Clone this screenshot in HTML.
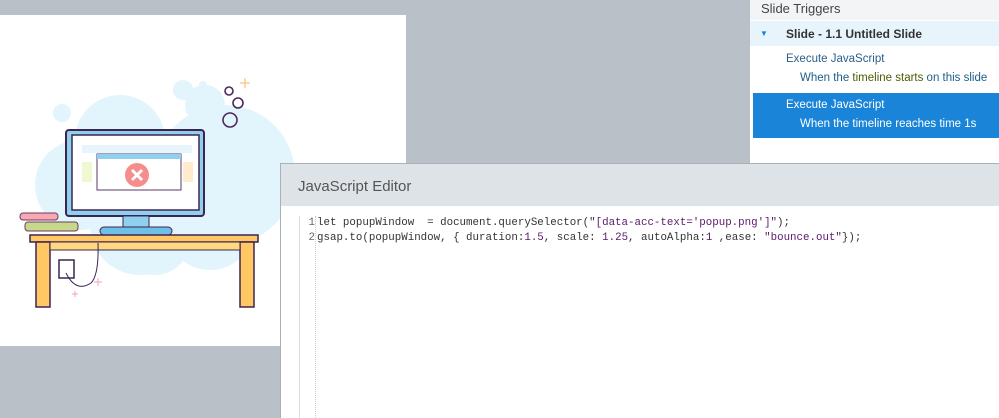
<!DOCTYPE html>
<html><head><meta charset="utf-8"><style>
body{margin:0;width:999px;height:417px;background:#b9c0c7;position:relative;overflow:hidden;font-family:"Segoe UI","Liberation Sans",sans-serif}
.slide{position:absolute;left:0;top:15px;width:406px;height:331px;background:#fff}
.panel{position:absolute;left:750px;top:0;width:249px;height:163px;background:#fff;border-bottom:1px solid #9aa3ab}
.ph{height:20px;background:#f2f4f6;font-size:13px;color:#444;padding-left:11px;line-height:18px}
.prow{position:absolute;top:21px;left:0;right:0;height:25px;background:#e7f4fb;font-size:12px;font-weight:bold;color:#333;line-height:26px}
.t{position:absolute;font-size:11.5px;color:#2c5f8a}
.sel{position:absolute;left:3px;right:0;top:93px;height:45px;background:#1a85d8}
.ed{position:absolute;left:280px;top:163px;width:719px;height:254px;background:#fff;border-left:1px solid #a8b0b8;border-top:1px solid #a8b0b8}
.eh{height:42px;background:#dee3e7;font-size:15px;color:#555;padding-left:17px;line-height:46px}
.code{position:absolute;left:18px;top:52px;bottom:0;right:0;border-left:1px solid #ddd;font-family:"Liberation Mono",monospace;font-size:10.8px;line-height:15px;color:#333}
.gut{position:absolute;left:0;top:0;width:15px;bottom:0;border-right:1px dotted #ccc;text-align:right;color:#666}
.ln{position:absolute;left:17px;top:0;white-space:pre}
.s{color:#5a1a6a}
</style></head><body>
<div class="slide">
<svg width="406" height="331" viewBox="0 15 406 331">
<g fill="#e2f5fc">
<circle cx="120" cy="140" r="45"/><circle cx="80" cy="185" r="45"/><circle cx="225" cy="175" r="70"/><circle cx="140" cy="225" r="50"/><circle cx="210" cy="225" r="45"/><circle cx="155" cy="240" r="35"/><circle cx="205" cy="105" r="20"/><circle cx="198" cy="103" r="8" /><circle cx="183" cy="90" r="10"/><circle cx="203" cy="85" r="4"/><circle cx="62" cy="113" r="9"/><circle cx="270" cy="155" r="3"/>
</g>
<g fill="none" stroke="#4a2a5a" stroke-width="1.6"><circle cx="229" cy="91" r="4"/><circle cx="238" cy="103" r="5"/><circle cx="230" cy="120" r="7"/></g>
<path d="M245 78v10M240 83h10" stroke="#f4b860" stroke-width="1"/>
<rect x="66" y="130" width="138" height="86" rx="3" fill="#8fd0ef" stroke="#3d2552" stroke-width="2"/>
<rect x="72" y="135" width="127" height="75" fill="#fff" stroke="#3d2552" stroke-width="1.5"/>
<rect x="82" y="145" width="110" height="8" fill="#e8f4fb"/><rect x="82" y="162" width="10" height="20" fill="#f0f8d0"/><rect x="183" y="162" width="10" height="20" fill="#ffeccc"/>
<rect x="97" y="154" width="84" height="36" fill="#fff" stroke="#5a3a6a" stroke-width="1"/><rect x="97" y="154" width="84" height="5" fill="#8fd0ef"/>
<circle cx="137" cy="175" r="12" fill="#f58d8d"/><path d="M132 170l10 10M142 170l-10 10" stroke="#fff" stroke-width="3"/>
<rect x="123" y="216" width="26" height="11" fill="#8fd0ef" stroke="#3d2552"/>
<rect x="100" y="227" width="72" height="8" rx="4" fill="#6fc0e6" stroke="#3d2552"/>
<rect x="20" y="213" width="38" height="7" rx="3" fill="#f7a8b0" stroke="#6b3a60"/>
<rect x="25" y="222" width="53" height="9" rx="3" fill="#c8d88a" stroke="#6b3a60"/>
<rect x="30" y="235" width="228" height="7" fill="#ffc865" stroke="#3d2552" stroke-width="1.5"/>
<rect x="36" y="242" width="14" height="65" fill="#ffc865" stroke="#3d2552" stroke-width="1.5"/>
<rect x="240" y="242" width="14" height="65" fill="#ffc865" stroke="#3d2552" stroke-width="1.5"/>
<rect x="50" y="242" width="190" height="8" fill="#ffd880" stroke="#3d2552"/>
<rect x="59" y="260" width="15" height="18" fill="#fff" stroke="#3d2552" stroke-width="1.5"/>
<path d="M66 273q10 20 25 10 q8-8 7-40" fill="none" stroke="#3d2552" stroke-width="1"/>
<path d="M98 278v8M94 282h8M75 291v6M72 294h6" stroke="#f0a0c0"/>
</svg>
</div>
<div class="panel">
<div class="ph">Slide Triggers</div>
<div class="prow"><span style="position:absolute;left:10px;font-size:8px;color:#1a85d8">▼</span><span style="position:absolute;left:36px">Slide - 1.1 Untitled Slide</span></div>
<div class="t" style="left:36px;top:53px">Execute JavaScript</div>
<div class="t" style="left:50px;top:72px;color:#1e5d88">When the <span style="color:#4a5e00">timeline starts</span> on this slide</div>
<div class="sel"></div>
<div class="t" style="left:36px;top:99px;color:#fff">Execute JavaScript</div>
<div class="t" style="left:50px;top:118px;color:#fff">When the timeline reaches time 1s</div>
</div>
<div class="ed">
<div class="eh">JavaScript Editor</div>
<div class="code"><div class="gut">1<br>2</div>
<div class="ln">let popupWindow  = document.querySelector(<span class="s">"[data-acc-text='popup.png']"</span>);
gsap.to(popupWindow, { duration:<span class="s">1.5</span>, scale: <span class="s">1.25</span>, autoAlpha:<span class="s">1</span> ,ease: <span class="s">"bounce.out"</span>});</div></div>
</div>
</body></html>
